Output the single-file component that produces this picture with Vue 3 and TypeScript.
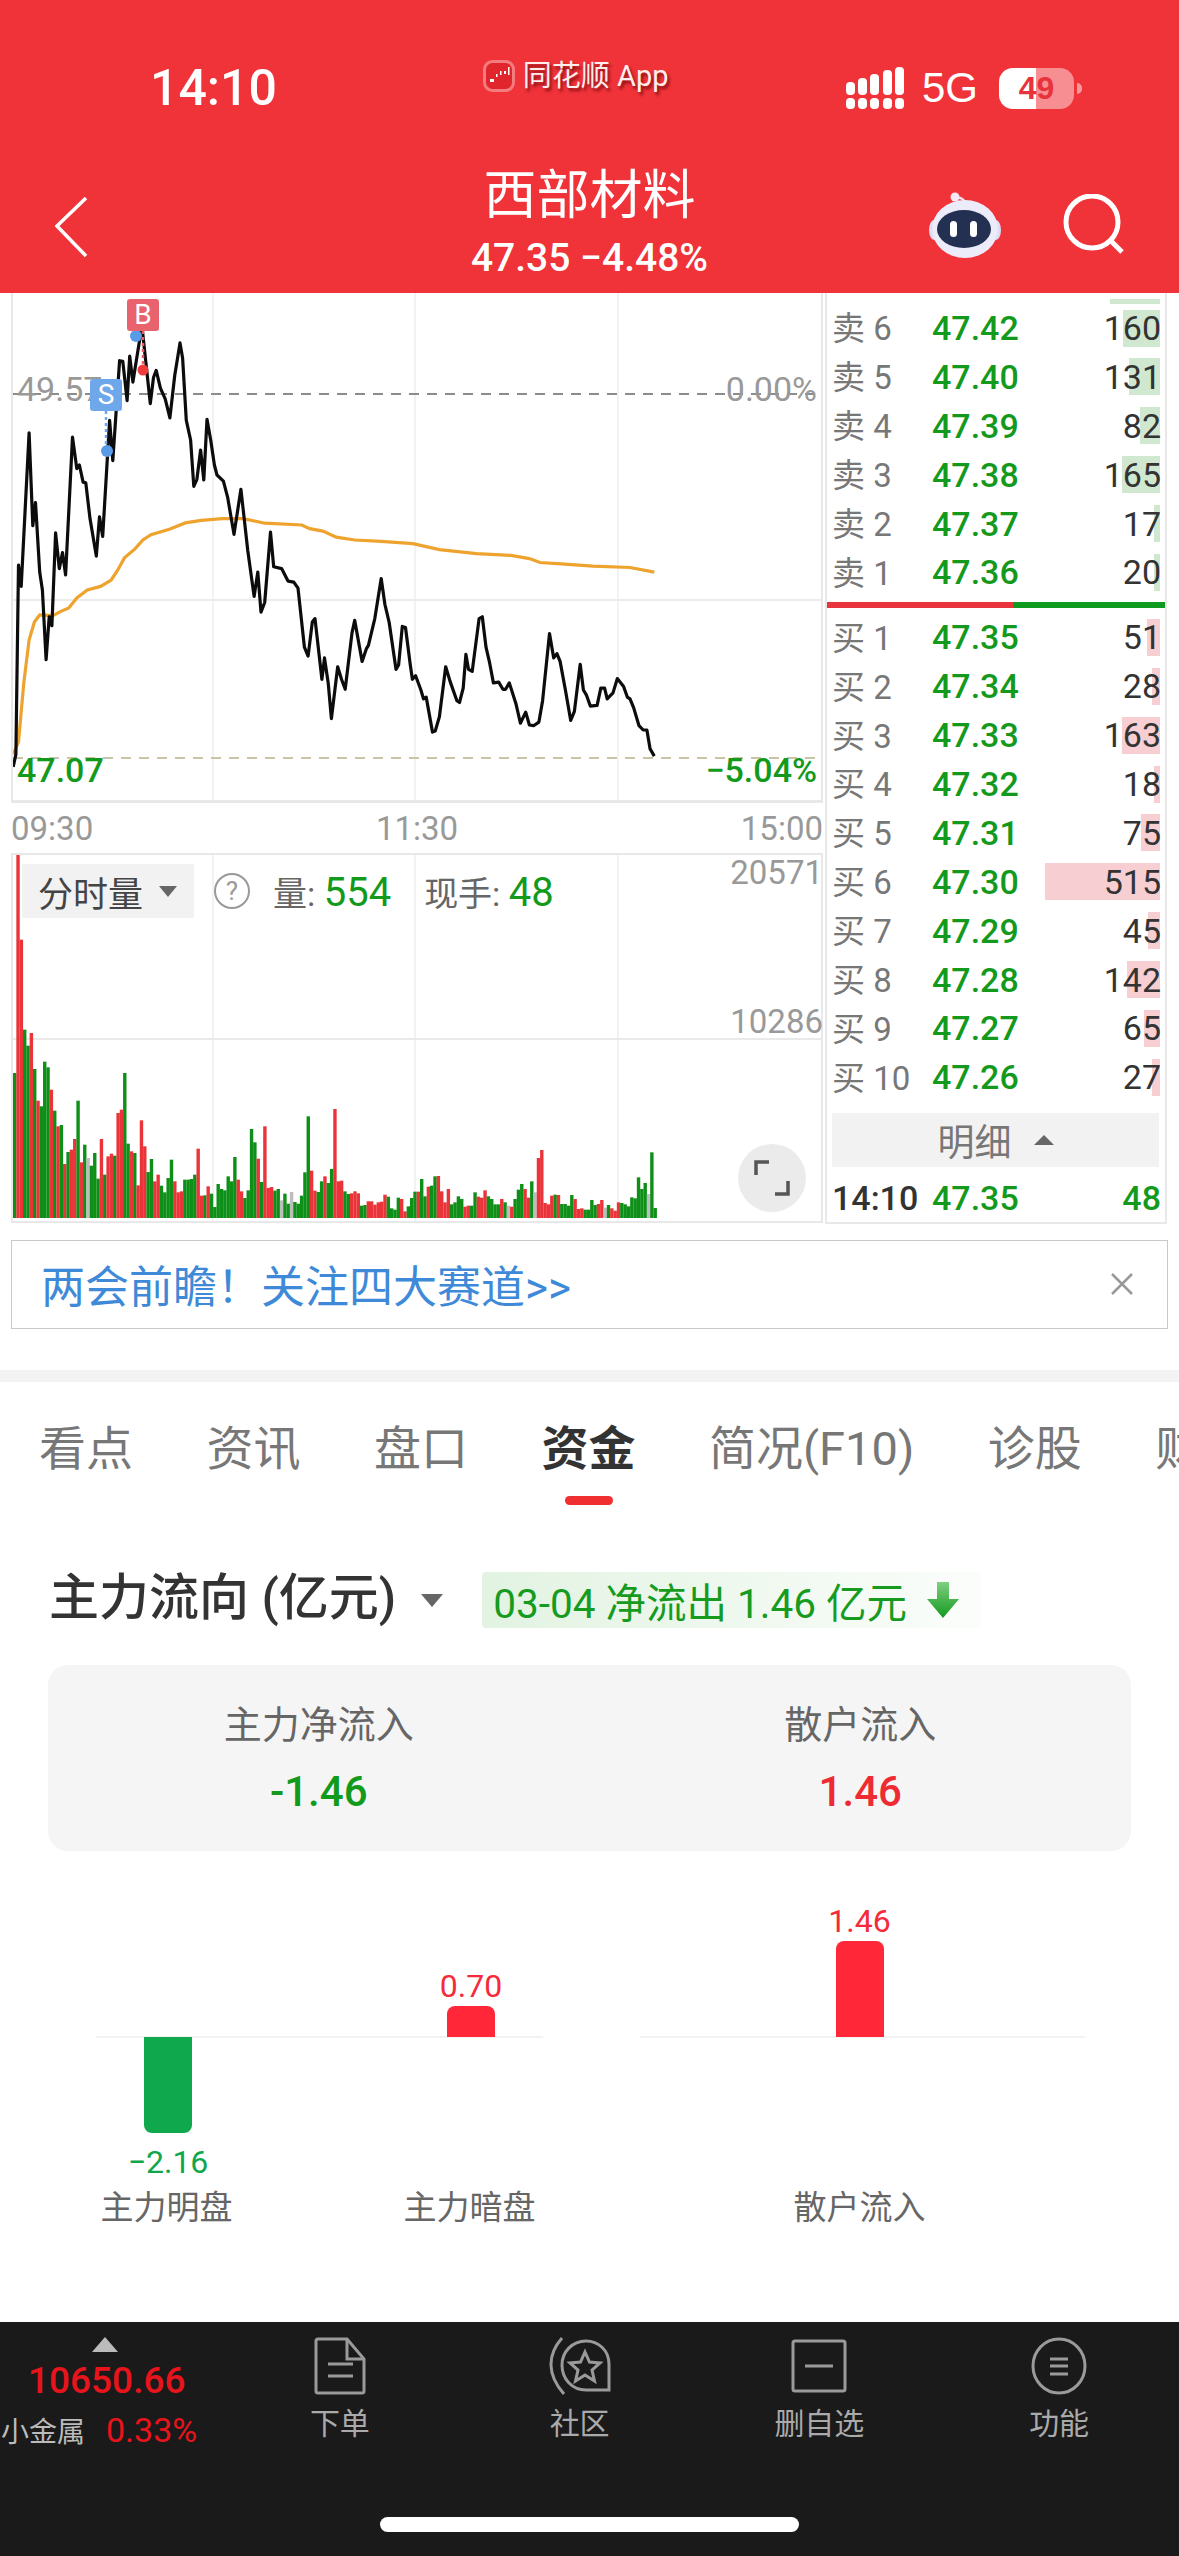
<script setup lang="ts">
type Quote = { label: string; price: string; vol: number }

const tabs = ['看点', '资讯', '盘口', '资金', '简况(F10)', '诊股', '财务']

const sells: Quote[] = [
  { label: '卖 6', price: '47.42', vol: 160 },
  { label: '卖 5', price: '47.40', vol: 131 },
  { label: '卖 4', price: '47.39', vol: 82 },
  { label: '卖 3', price: '47.38', vol: 165 },
  { label: '卖 2', price: '47.37', vol: 17 },
  { label: '卖 1', price: '47.36', vol: 20 }
]

const buys: Quote[] = [
  { label: '买 1', price: '47.35', vol: 51 },
  { label: '买 2', price: '47.34', vol: 28 },
  { label: '买 3', price: '47.33', vol: 163 },
  { label: '买 4', price: '47.32', vol: 18 },
  { label: '买 5', price: '47.31', vol: 75 },
  { label: '买 6', price: '47.30', vol: 515 },
  { label: '买 7', price: '47.29', vol: 45 },
  { label: '买 8', price: '47.28', vol: 142 },
  { label: '买 9', price: '47.27', vol: 65 },
  { label: '买 10', price: '47.26', vol: 27 }
]

const barWidth = (vol: number) => `${Math.round(vol * 0.22 + 2)}px`

// price line, read off the chart at x * 1.889 and (y - 290) * 2.8
const rawLine =
  '25,1335 30,1300 35,770 40,830 55,400 62,660 67,595 75,790 80,840 87,1035 93,915 98,940 105,680 112,780 118,735 124,798 137,412 145,500 150,490 157,538 162,540 170,640 182,745 188,635 194,690 207,365 213,478 226,198 232,200 240,310 245,185 251,258 268,100 284,318 290,245 295,225 303,275 312,305 321,358 330,240 340,148 345,190 352,365 360,420 366,550 372,530 379,448 385,532 391,362 398,420 405,490 410,518 422,535 430,580 442,684 455,558 462,650 468,730 480,858 487,790 493,902 500,875 511,678 517,775 532,780 544,815 555,818 563,835 575,1000 582,1025 590,930 595,920 608,1090 613,1030 620,1100 626,1200 638,1055 645,1090 652,1118 665,960 670,925 684,1040 692,1005 696,995 708,920 720,808 727,880 735,930 748,1062 753,1050 760,942 766,945 775,1050 779,1090 785,1080 795,1120 800,1145 805,1140 817,1238 822,1235 830,1195 842,1055 850,1095 863,1150 868,1155 875,1115 880,1020 885,1062 892,1068 905,920 911,915 918,1000 925,1045 932,1100 942,1098 950,1118 955,1118 962,1100 975,1160 983,1213 993,1182 1000,1218 1008,1220 1018,1210 1025,1150 1038,962 1046,1030 1052,1018 1058,1040 1068,1120 1078,1205 1085,1180 1096,1048 1102,1120 1108,1135 1115,1165 1128,1163 1135,1115 1142,1115 1147,1145 1158,1128 1166,1088 1178,1110 1185,1140 1190,1145 1197,1170 1207,1220 1215,1232 1222,1232 1228,1285 1236,1305'

const rawAvg =
  '25,1300 35,1265 45,1100 55,980 65,930 75,910 100,912 115,900 130,890 145,862 165,840 190,830 210,812 222,785 235,750 255,725 270,700 285,685 320,670 350,652 380,645 420,640 460,640 500,653 570,658 585,668 610,675 635,692 670,700 720,704 780,710 830,727 900,738 965,743 1000,752 1020,763 1060,767 1120,773 1190,777 1236,790'

const toPoints = (raw: string) =>
  raw
    .split(' ')
    .map((p) => {
      const [x, y] = p.split(',').map(Number)
      return `${(x / 1.889 - 13).toFixed(1)},${(y / 2.8 - 3).toFixed(1)}`
    })
    .join(' ')

const linePoints = toPoints(rawLine)
const avgPoints = toPoints(rawAvg)

// volume bars: colour + top of bar, first half base 655, second half base 357 (3x crops)
const rawBarsA =
  'g220 r-435 r-180 g90 g138 r100 g208 r303 g320 g186 g203 r270 g333 r380 g376 r493 g457 r450 r418 g303 r488 g435 s475 g498 g460 g537 r418 g525 r470 r462 g468 r340 r330 g220 g432 r455 g460 r557 r362 r440 g517 g478 r545 r525 g558 g578 g535 g480 r545 r578 r575 g540 g540 g538 g525 r447 r588 g587 r560 g582 g622 g553 g568 g572 g530 g545 g472 r540 r575 g595 g572 g388 g428 r477 g547 r380 r565 r562 g573 g568 s602 g582 g612 s577 g607 g612 g588 g518 g350 r513 r573 g577 g545 r530 g550 g508 r328 r545'
const rawBarsB =
  'r245 g277 g285 r283 r277 r283 g320 g318 r307 r307 r317 r310 r308 r287 g293 g328 g332 g296 r300 r337 g322 g297 g278 r278 g240 g292 r263 g260 g232 r231 r277 r310 r270 g316 g310 g292 g300 r323 r320 g320 g280 r293 r296 r274 g292 g300 g316 g316 r300 g310 s320 r323 g300 g272 g255 r270 r296 g247 s280 r177 r153 r312 r316 r290 g287 r288 g315 g315 g320 g288 r300 r330 r328 g332 g332 g303 g318 r315 r303 s326 g318 r328 r335 r310 g312 g316 g322 g295 g298 g235 g270 g252 s285 g160 g327'

const barFill: Record<string, string> = { g: '#0e8f18', r: '#ea3439', s: '#bdbdbd' }
const parseBars = (raw: string, base: number) =>
  raw.split(' ').map((b) => ({ fill: barFill[b[0]], h: (base - Number(b.slice(1))) / 3 }))

const volBars = [...parseBars(rawBarsA, 655), ...parseBars(rawBarsB, 357)].map((b, i) => ({
  x: i * 3.336,
  y: 363 - b.h,
  h: b.h,
  fill: b.fill
}))
</script>

<template>
  <div class="page">
    <header class="head">
      <div class="status">
        <span class="clock">14:10</span>
        <div class="app-tag">
          <svg class="app-logo" width="32" height="32" viewBox="0 0 32 32">
            <rect x="1.5" y="1.5" width="29" height="29" rx="8" fill="#e0262c" stroke="#f47c7e" stroke-width="3" />
            <path d="M7 22h4v-3H7zM13 17h1.5v-3H13zM17 15h1.5v-4H17zM21 14h2v-3h-2zM25 15h1.5V7H25z" fill="#fff" />
          </svg>
          <span class="app-name">同花顺 App</span>
        </div>
        <div class="status-right">
          <svg width="60" height="42" viewBox="0 0 60 42" fill="#fff">
            <rect x="0" y="31" width="9" height="11" rx="4" />
            <rect x="12" y="31" width="9" height="11" rx="4" />
            <rect x="24" y="31" width="9" height="11" rx="4" />
            <rect x="37" y="31" width="9" height="11" rx="4" />
            <rect x="49" y="31" width="9" height="11" rx="4" />
            <rect x="0" y="15" width="9" height="13" rx="4" />
            <rect x="12" y="11" width="9" height="17" rx="4" />
            <rect x="24" y="7" width="9" height="21" rx="4" />
            <rect x="37" y="3" width="9" height="25" rx="4" />
            <rect x="49" y="0" width="9" height="28" rx="4" />
          </svg>
          <span class="net">5G</span>
          <div class="battery"><span>49</span></div>
          <i class="battery-tip"></i>
        </div>
      </div>
      <div class="nav">
        <svg class="back" width="34" height="62" viewBox="0 0 34 62">
          <polyline points="31,2 2,30 31,60" fill="none" stroke="#fff" stroke-width="3.5" />
        </svg>
        <div class="title-box">
          <div class="title">西部材料</div>
          <div class="sub">47.35 −4.48%</div>
        </div>
        <div class="nav-right">
          <svg width="74" height="66" viewBox="0 0 74 66">
            <path d="M26 7c6-3 11 0 12 7" fill="none" stroke="#ecdff2" stroke-width="2.5" />
            <circle cx="27" cy="5" r="4.5" fill="#f3e9f5" />
            <ellipse cx="6" cy="38" rx="5" ry="10" fill="#dcdcf4" />
            <ellipse cx="68" cy="38" rx="5" ry="10" fill="#dcdcf4" />
            <ellipse cx="37" cy="37" rx="33" ry="29" fill="#ecebf9" />
            <ellipse cx="36" cy="37" rx="27" ry="19" fill="#243052" />
            <rect x="22" y="29" width="7" height="16" rx="3.5" fill="#fff" />
            <rect x="42" y="29" width="7" height="16" rx="3.5" fill="#fff" />
          </svg>
          <svg class="search" width="62" height="62" viewBox="0 0 62 62">
            <circle cx="30" cy="28" r="26" fill="none" stroke="#fff" stroke-width="5" />
            <line x1="49" y1="47" x2="60" y2="58" stroke="#fff" stroke-width="5" />
          </svg>
        </div>
      </div>
    </header>

    <section class="market">
      <div class="left">
        <div class="price-chart">
          <svg class="plot" width="808" height="507" viewBox="0 0 808 507">
            <line x1="200" y1="0" x2="200" y2="507" class="grid" />
            <line x1="402" y1="0" x2="402" y2="507" class="grid" />
            <line x1="605" y1="0" x2="605" y2="507" class="grid" />
            <line x1="0" y1="307" x2="808" y2="307" stroke="#ebebeb" stroke-width="2" />
            <line x1="0" y1="101" x2="808" y2="101" stroke="#8c8c8c" stroke-width="2" stroke-dasharray="10 8" />
            <line x1="0" y1="465" x2="808" y2="465" stroke="#c9c4a6" stroke-width="2" stroke-dasharray="10 8" />
            <polyline :points="avgPoints" fill="none" stroke="#eea32f" stroke-width="3.2" />
            <polyline :points="linePoints" fill="none" stroke="#0c0c0c" stroke-width="3.2" stroke-linejoin="round" />
            <line x1="130" y1="38" x2="130" y2="77" stroke="#ef5a62" stroke-width="2.5" stroke-dasharray="3 3" />
            <line x1="93" y1="118" x2="93" y2="158" stroke="#6fa8ea" stroke-width="2.5" stroke-dasharray="3 3" />
            <circle cx="123" cy="43" r="6" fill="#5a9be8" />
            <circle cx="130" cy="77" r="5.5" fill="#ef3b3b" />
            <circle cx="94" cy="158" r="6" fill="#5a9be8" />
          </svg>
          <span class="tag base-l">49.57</span>
          <span class="tag base-r">0.00%</span>
          <span class="tag low-l">47.07</span>
          <span class="tag low-r">−5.04%</span>
          <span class="marker buy">B</span>
          <span class="marker sell">S</span>
        </div>
        <div class="times">
          <span>09:30</span>
          <span>11:30</span>
          <span>15:00</span>
        </div>
        <div class="vol-chart">
          <svg class="plot" width="808" height="366" viewBox="0 0 808 366">
            <line x1="200" y1="0" x2="200" y2="366" class="grid" />
            <line x1="402" y1="0" x2="402" y2="366" class="grid" />
            <line x1="605" y1="0" x2="605" y2="366" class="grid" />
            <line x1="0" y1="184" x2="808" y2="184" stroke="#e9e9e9" stroke-width="2" />
            <rect
              v-for="(b, i) in volBars"
              :key="i"
              :x="b.x"
              :y="b.y"
              width="3.4"
              :height="b.h"
              :fill="b.fill"
            />
          </svg>
          <div class="vol-info">
            <div class="vol-chip">
              <span>分时量</span>
              <i class="chip-arrow"></i>
            </div>
            <span class="help">?</span>
            <span class="vol-item">量: <b>554</b></span>
            <span class="vol-item now">现手: <b>48</b></span>
          </div>
          <span class="scale top">20571</span>
          <span class="scale mid">10286</span>
          <div class="expand">
            <svg width="36" height="36" viewBox="0 0 36 36" fill="none" stroke="#555" stroke-width="3.5">
              <path d="M2 15V2h13" />
              <path d="M34 21v13H21" />
            </svg>
          </div>
        </div>
      </div>

      <div class="book">
        <div class="peek"><i class="depth green peek-bar"></i></div>
        <div v-for="q in sells" :key="q.label" class="row">
          <span class="lab">{{ q.label }}</span>
          <span class="prc">{{ q.price }}</span>
          <span class="amt">{{ q.vol }}</span>
          <i class="depth green" :style="{ width: barWidth(q.vol) }"></i>
        </div>
        <div class="split"><i class="split-red"></i><i class="split-green"></i></div>
        <div v-for="q in buys" :key="q.label" class="row">
          <span class="lab">{{ q.label }}</span>
          <span class="prc">{{ q.price }}</span>
          <span class="amt">{{ q.vol }}</span>
          <i class="depth red" :style="{ width: barWidth(q.vol) }"></i>
        </div>
        <div class="detail-btn">
          <span>明细</span>
          <i class="detail-arrow"></i>
        </div>
        <div class="row tick">
          <span class="lab time">14:10</span>
          <span class="prc">47.35</span>
          <span class="amt up">48</span>
        </div>
      </div>
    </section>

    <div class="banner">
      <span>两会前瞻！关注四大赛道&gt;&gt;</span>
      <svg width="24" height="22" viewBox="0 0 24 22" stroke="#999" stroke-width="2.5">
        <line x1="2" y1="1" x2="22" y2="21" />
        <line x1="22" y1="1" x2="2" y2="21" />
      </svg>
    </div>

    <div class="gap"></div>

    <nav class="tabs">
      <span v-for="t in tabs" :key="t" class="tab" :class="{ active: t === '资金' }">{{ t }}</span>
    </nav>

    <div class="flow-head">
      <h2>主力流向 (亿元)</h2>
      <i class="flow-arrow"></i>
      <div class="flow-badge">
        <span>03-04 净流出 1.46 亿元</span>
        <svg width="32" height="36" viewBox="0 0 32 36">
          <defs>
            <linearGradient id="arrowFill" x1="0" y1="0" x2="0" y2="1">
              <stop offset="0" stop-color="#7fcf80" />
              <stop offset="1" stop-color="#139a1e" />
            </linearGradient>
          </defs>
          <path d="M10 0h12v17h10L16 36 0 17h10z" fill="url(#arrowFill)" />
        </svg>
      </div>
    </div>

    <div class="flow-card">
      <div class="flow-cell">
        <div class="cell-label">主力净流入</div>
        <div class="cell-value down">-1.46</div>
      </div>
      <div class="flow-cell">
        <div class="cell-label">散户流入</div>
        <div class="cell-value rise">1.46</div>
      </div>
    </div>

    <div class="flow-bars">
      <div class="bar-group first">
        <i class="axis"></i>
        <div class="bar-col">
          <div class="up-zone"></div>
          <div class="down-zone">
            <i class="bar green-bar h96"></i>
            <span class="bar-val green-val">−2.16</span>
          </div>
          <div class="bar-name">主力明盘</div>
        </div>
        <div class="bar-col">
          <div class="up-zone">
            <span class="bar-val red-val">0.70</span>
            <i class="bar red-bar h31"></i>
          </div>
          <div class="down-zone"></div>
          <div class="bar-name">主力暗盘</div>
        </div>
      </div>
      <div class="bar-group second">
        <i class="axis"></i>
        <div class="bar-col">
          <div class="up-zone">
            <span class="bar-val red-val">1.46</span>
            <i class="bar red-bar h96"></i>
          </div>
          <div class="down-zone"></div>
          <div class="bar-name">散户流入</div>
        </div>
      </div>
    </div>

    <footer class="foot">
      <div class="index">
        <i class="index-arrow"></i>
        <div class="index-price">10650.66</div>
        <div class="index-sub">小金属<b>0.33%</b></div>
      </div>
      <div class="foot-item">
        <svg width="52" height="58" viewBox="0 0 52 58" fill="none" stroke="#9a9a9a" stroke-width="3">
          <path d="M2 4a2 2 0 0 1 2-2h29l17 20v32a2 2 0 0 1-2 2H4a2 2 0 0 1-2-2z" />
          <path d="M33 2v20h17" />
          <path d="M14 27h25M14 39h25" />
        </svg>
        <span>下单</span>
      </div>
      <div class="foot-item">
        <svg width="62" height="58" viewBox="0 0 62 58" fill="none" stroke="#9a9a9a" stroke-width="3">
          <path d="M13 1C-2 18-2 38 15 57" />
          <path d="M60 53V27C60 13 49 4 37 4 23 4 13 15 13 28c0 14 10 25 24 25z" />
          <path d="M36 15l4.500 10 10.500 1-8 7 2.500 11-9.500-6-9.500 6 2.500-11-8-7 10.500-1z" />
        </svg>
        <span>社区</span>
      </div>
      <div class="foot-item">
        <svg width="56" height="58" viewBox="0 0 56 58" fill="none" stroke="#9a9a9a" stroke-width="3">
          <rect x="2" y="4" width="52" height="50" rx="2" />
          <path d="M14 29h28" />
        </svg>
        <span>删自选</span>
      </div>
      <div class="foot-item">
        <svg width="56" height="58" viewBox="0 0 56 58" fill="none" stroke="#9a9a9a" stroke-width="3">
          <ellipse cx="28" cy="29" rx="26" ry="27" />
          <path d="M19 22h18M19 29h18M19 37h18" />
        </svg>
        <span>功能</span>
      </div>
      <i class="home-bar"></i>
    </footer>
  </div>
</template>

<style scoped>
.page {
  width: 1179px;
  height: 2556px;
  display: flex;
  flex-direction: column;
  overflow: hidden;
  background: #fff;
  font-family: Roboto, 'Noto Sans CJK SC', sans-serif;
}

.head {
  height: 293px;
  background: #f03239;
  color: #fff;
  flex-shrink: 0;
  position: relative;
  z-index: 2;
}

.status {
  height: 150px;
  display: flex;
  align-items: flex-start;
}

.clock {
  margin: 63px 0 0 150px;
  font-size: 50px;
  line-height: 50px;
  font-weight: 500;
}

.app-tag {
  margin: 59px 0 0 206px;
  display: flex;
  align-items: center;
  gap: 8px;
}

.app-name {
  font-size: 29px;
  line-height: 34px;
  color: #ffeeee;
  text-shadow: 2px 3px 3px rgba(90, 0, 0, 0.7);
}

.status-right {
  margin: 67px 97px 0 auto;
  display: flex;
  align-items: center;
}

.net {
  margin-left: 16px;
  font-family: 'Liberation Sans', sans-serif;
  font-size: 42px;
  line-height: 42px;
}

.battery {
  margin-left: 21px;
  width: 75px;
  height: 41px;
  border-radius: 14px;
  background: linear-gradient(to right, #fff 50%, rgba(255, 255, 255, 0.45) 50%);
  display: flex;
  align-items: center;
  justify-content: center;
  color: #e8323c;
  font-family: 'Liberation Sans', sans-serif;
  font-size: 32px;
  font-weight: 700;
}

.battery-tip {
  margin-left: 3px;
  width: 5px;
  height: 11px;
  border-radius: 0 6px 6px 0;
  background: rgba(255, 255, 255, 0.5);
}

.nav {
  height: 143px;
  display: grid;
  grid-template-columns: 1fr auto 1fr;
}

.back {
  margin: 46px 0 0 55px;
}

.title-box {
  text-align: center;
  padding-top: 16px;
}

.title {
  font-size: 53px;
  line-height: 60px;
}

.sub {
  margin-top: 10px;
  font-size: 39px;
  line-height: 44px;
  font-weight: 500;
}

.nav-right {
  display: flex;
  justify-content: flex-end;
  align-items: flex-start;
  padding: 42px 55px 0 0;
}

.search {
  margin: 2px 0 0 60px;
}

.market {
  height: 931px;
  flex-shrink: 0;
  display: flex;
  padding-left: 11px;
}

.left {
  width: 812px;
}

.plot {
  display: block;
  position: absolute;
  left: 0;
  top: 0;
}

.grid {
  stroke: #eeeeee;
  stroke-width: 1.5;
}

.price-chart {
  position: relative;
  height: 510px;
  box-sizing: border-box;
  border-left: 2px solid #e8e8e8;
  border-right: 2px solid #e8e8e8;
  border-bottom: 3px solid #e8e8e8;
}

.tag {
  position: absolute;
  font-size: 34px;
  line-height: 36px;
}

.base-l {
  left: 4px;
  top: 78px;
  color: #999;
}

.base-r {
  right: 4px;
  top: 78px;
  color: #999;
}

.low-l {
  left: 4px;
  top: 459px;
  color: #139a1c;
  font-weight: 500;
}

.low-r {
  right: 4px;
  top: 459px;
  color: #139a1c;
  font-weight: 500;
}

.marker {
  position: absolute;
  color: #fff;
  font-size: 28px;
  line-height: 32px;
  width: 32px;
  text-align: center;
  border-radius: 3px;
}

.buy {
  left: 114px;
  top: 6px;
  background: #e8636d;
}

.sell {
  left: 77px;
  top: 86px;
  background: #6fa8ea;
}

.times {
  height: 50px;
  display: flex;
  justify-content: space-between;
  align-items: center;
  color: #999;
  font-size: 33px;
}

.vol-chart {
  position: relative;
  height: 370px;
  box-sizing: border-box;
  border: 2px solid #e8e8e8;
}

.vol-info {
  position: absolute;
  left: 9px;
  top: 9px;
  display: flex;
  align-items: center;
}

.vol-chip {
  width: 172px;
  height: 54px;
  box-sizing: border-box;
  padding-left: 16px;
  background: #f2f2f2;
  display: flex;
  align-items: center;
  gap: 16px;
  color: #444;
  font-size: 35px;
}

.chip-arrow {
  width: 0;
  height: 0;
  border-left: 9px solid transparent;
  border-right: 9px solid transparent;
  border-top: 11px solid #666;
}

.help {
  margin-left: 20px;
  width: 32px;
  height: 32px;
  border: 2px solid #999;
  border-radius: 50%;
  color: #999;
  font-size: 26px;
  line-height: 32px;
  text-align: center;
}

.vol-item {
  margin-left: 23px;
  color: #666;
  font-size: 34px;
}

.vol-item b {
  color: #139a1c;
  font-weight: 400;
  font-size: 40px;
}

.now {
  margin-left: 33px;
}

.scale {
  position: absolute;
  right: -2px;
  color: #999;
  font-size: 33px;
  line-height: 36px;
}

.top {
  top: 0;
}

.mid {
  top: 149px;
}

.expand {
  position: absolute;
  left: 725px;
  top: 289px;
  width: 68px;
  height: 68px;
  border-radius: 50%;
  background: #ebebeb;
  display: flex;
  align-items: center;
  justify-content: center;
}

.book {
  margin-left: 2px;
  width: 342px;
  box-sizing: border-box;
  border: 2px solid #e8e8e8;
  border-width: 0 2px 2px 2px;
}

.peek {
  position: relative;
  height: 10.5px;
  overflow: hidden;
}

.peek-bar {
  width: 50px;
  height: 11px;
  top: 0;
  right: 10px;
}

.row {
  position: relative;
  height: 48.9px;
  display: flex;
  align-items: center;
  padding: 0 4px 0 5px;
  font-size: 34px;
}

.lab {
  position: relative;
  z-index: 1;
  width: 100px;
  flex-shrink: 0;
  margin-top: -3px;
  color: #777;
  font-size: 33px;
}

.prc {
  position: relative;
  z-index: 1;
  color: #139a1c;
  font-weight: 500;
}

.amt {
  position: relative;
  z-index: 1;
  margin-left: auto;
  color: #333;
}

.depth {
  position: absolute;
  right: 5px;
  top: 6px;
  height: 37px;
}

.green {
  background: #d0e8d0;
}

.red {
  background: #f7cfd2;
}

.split {
  display: flex;
  height: 6px;
  margin: 5px 0;
}

.split-red {
  width: 186px;
  background: #e8343c;
}

.split-green {
  flex: 1;
  background: #0f9a20;
}

.detail-btn {
  margin: 11px 6px 7px 5px;
  height: 54px;
  background: #f2f2f2;
  display: flex;
  align-items: center;
  justify-content: center;
  gap: 22px;
  color: #777;
  font-size: 37px;
}

.detail-arrow {
  width: 0;
  height: 0;
  border-left: 10px solid transparent;
  border-right: 10px solid transparent;
  border-bottom: 10px solid #666;
}

.time {
  margin-top: 0;
  color: #333;
  font-size: 34px;
  font-weight: 500;
}

.amt.up {
  color: #139a1c;
  font-weight: 500;
}

.banner {
  flex-shrink: 0;
  margin: 16px 11px 0;
  height: 89px;
  box-sizing: border-box;
  border: 1.5px solid #c8c8c8;
  padding: 0 33px 2px 29px;
  display: flex;
  align-items: center;
  justify-content: space-between;
  color: #3e8ad8;
  font-size: 44px;
}

.gap {
  flex-shrink: 0;
  margin-top: 41px;
  height: 12px;
  background: #f3f3f3;
}

.tabs {
  flex-shrink: 0;
  height: 188px;
  box-sizing: border-box;
  padding: 37px 0 0 39px;
  display: flex;
  gap: 73.5px;
  white-space: nowrap;
  overflow: hidden;
}

.tab {
  position: relative;
  height: 60px;
  line-height: 60px;
  color: #777;
  font-size: 47px;
}

.active {
  color: #333;
  font-weight: 700;
}

.active::after {
  content: '';
  position: absolute;
  left: 50%;
  margin-left: -24px;
  top: 77px;
  width: 48px;
  height: 9px;
  border-radius: 5px;
  background: #f03030;
}

.flow-head {
  flex-shrink: 0;
  height: 60px;
  padding-left: 49px;
  display: flex;
  align-items: center;
}

h2 {
  margin: 0 0 4px;
  color: #333;
  font-size: 50px;
  line-height: 60px;
  font-weight: 500;
}

.flow-arrow {
  margin-left: 25px;
  width: 0;
  height: 0;
  border-left: 11px solid transparent;
  border-right: 11px solid transparent;
  border-top: 13px solid #666;
}

.flow-badge {
  margin-left: 39px;
  height: 56px;
  width: 499px;
  box-sizing: border-box;
  padding-left: 11px;
  display: flex;
  align-items: center;
  gap: 20px;
  color: #169b1f;
  font-size: 40.5px;
  background: linear-gradient(to right, #e2f3e2, #fbfdfb);
  border-radius: 4px;
}

.flow-card {
  flex-shrink: 0;
  margin: 35px 48px 0;
  height: 186px;
  display: flex;
  background: #f5f5f5;
  border-radius: 20px;
}

.flow-cell {
  flex: 1;
  text-align: center;
  padding-top: 38px;
}

.cell-label {
  color: #666;
  font-size: 38px;
  line-height: 44px;
}

.cell-value {
  margin-top: 22px;
  font-size: 42px;
  line-height: 46px;
  font-weight: 500;
}

.down {
  color: #119a1c;
}

.rise {
  color: #ee2b32;
}

.flow-bars {
  flex-shrink: 0;
  margin-top: 49px;
  padding-left: 96px;
  display: flex;
  gap: 97px;
}

.bar-group {
  position: relative;
  display: flex;
}

.first {
  width: 447px;
  justify-content: space-between;
}

.second {
  width: 439px;
  padding-right: 6px;
  justify-content: center;
}

.axis {
  position: absolute;
  left: 0;
  right: 0;
  top: 136px;
  height: 2px;
  background: #f2f2f2;
}

.bar-col {
  position: relative;
  width: 144px;
  text-align: center;
}

.up-zone {
  height: 137px;
  display: flex;
  flex-direction: column;
  justify-content: flex-end;
  align-items: center;
}

.down-zone {
  height: 148px;
  display: flex;
  flex-direction: column;
  align-items: center;
}

.bar {
  width: 48px;
  display: block;
}

.h96 {
  height: 96px;
}

.h31 {
  height: 31px;
}

.red-bar {
  background: #ff2738;
  border-radius: 8px 8px 0 0;
}

.green-bar {
  background: #0fa84c;
  border-radius: 0 0 8px 8px;
}

.bar-val {
  font-size: 32px;
  line-height: 40px;
}

.red-val {
  color: #f52a3a;
}

.green-val {
  margin-top: 9px;
  color: #10a64b;
}

.bar-name {
  margin-right: 3px;
  color: #666;
  font-size: 33px;
  line-height: 46px;
}

.second .bar-name {
  margin-right: 0;
}

.foot {
  position: relative;
  margin-top: auto;
  height: 234px;
  flex-shrink: 0;
  display: flex;
  background: #1a1a1a;
}

.index {
  width: 220px;
  flex-shrink: 0;
  padding-top: 15px;
  box-sizing: border-box;
}

.index-arrow {
  display: block;
  margin-left: 92px;
  width: 0;
  height: 0;
  border-left: 13px solid transparent;
  border-right: 13px solid transparent;
  border-bottom: 15px solid #bbb;
}

.index-price {
  margin: 7px 0 0 28px;
  color: #e8141c;
  font-size: 37px;
  line-height: 44px;
  font-weight: 500;
}

.index-sub {
  margin: 7px 0 0 1px;
  color: #bbb;
  font-size: 28px;
  line-height: 40px;
  white-space: nowrap;
}

.index-sub b {
  margin-left: 21px;
  color: #e8141c;
  font-size: 34px;
  font-weight: 400;
}

.foot-item {
  width: 240px;
  padding-top: 15px;
  display: flex;
  flex-direction: column;
  align-items: center;
  color: #aaa;
  font-size: 30px;
}

.foot-item span {
  margin-top: 9px;
  line-height: 40px;
}

.home-bar {
  position: absolute;
  left: 380px;
  bottom: 24px;
  width: 419px;
  height: 15px;
  border-radius: 8px;
  background: #fff;
}
</style>
